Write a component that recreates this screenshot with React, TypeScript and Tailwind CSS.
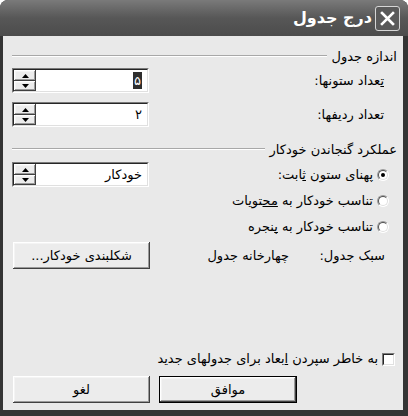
import React from "react";

const raised =
  "bg-[#ececec] shadow-[inset_-1px_-1px_0_#404040,inset_1px_1px_0_#ffffff,inset_-2px_-2px_0_#9a9a9a,inset_2px_2px_0_#f4f4f4]";

function Arrow({ up }: { up?: boolean }) {
  return (
    <svg width="7" height="4" viewBox="0 0 7 4">
      {up ? <path d="M3.5 0 L7 4 L0 4 Z" fill="#000" /> : <path d="M0 0 L7 0 L3.5 4 Z" fill="#000" />}
    </svg>
  );
}

function Spin({ children }: { children: React.ReactNode }) {
  return (
    <div className="w-[137px] h-[25px] border-t border-l border-t-[#7a7a7a] border-l-[#7a7a7a] border-b border-r border-b-white border-r-white">
      <div className="w-full h-full flex bg-white border-t border-l border-t-[#262626] border-l-[#262626] border-b border-r border-b-[#e0e0e0] border-r-[#e0e0e0]">
        <div className="flex-1 flex items-center pr-[5px] text-[13px] leading-none">{children}</div>
        <div className="w-[22px] flex flex-col">
          <div className={`h-[11px] flex items-center justify-center ${raised}`}>
            <Arrow up />
          </div>
          <div className={`h-[10px] flex items-center justify-center ${raised}`}>
            <Arrow />
          </div>
        </div>
      </div>
    </div>
  );
}

function Radio({ checked }: { checked?: boolean }) {
  return (
    <div className="w-[12px] h-[12px] shrink-0 rounded-full border border-t-[#9a9a9a] border-l-[#9a9a9a] border-b-white border-r-white bg-white flex items-center justify-center">
      <div className="w-[10px] h-[10px] rounded-full border border-t-[#505050] border-l-[#505050] border-b-[#e0e0e0] border-r-[#e0e0e0] flex items-center justify-center">
        {checked && <div className="w-[4px] h-[4px] rounded-full bg-black" />}
      </div>
    </div>
  );
}

function Header({ children }: { children: React.ReactNode }) {
  return (
    <div className="h-[14px] flex items-center gap-[5px] pr-[6px] pl-[9px] text-[13px] leading-none">
      <span className="whitespace-nowrap">{children}</span>
      <div className="flex-1 h-[2px] border-t border-t-[#a8a8a8] border-b border-b-white" />
    </div>
  );
}

export default function App() {
  return (
    <div className="w-[408px] h-[416px] bg-white font-['DejaVu_Sans',sans-serif] text-black">
      <div dir="rtl" className="w-[408px] h-[416px] flex flex-col rounded-t-[8px] overflow-hidden bg-[#343434]">
        {/* title bar */}
        <div className="h-[36px] shrink-0 flex items-center gap-[3px] pr-[8px] bg-gradient-to-b from-[#7a7a7a] via-[#575757] to-[#4c4c4c]">
          <div className="w-[25px] h-[25px] rounded-[3px] border border-[#d6d6d6] bg-[#5a5a5a] flex items-center justify-center">
            <svg width="15" height="15" viewBox="0 0 15 15">
              <path d="M2 2 L13 13 M13 2 L2 13" stroke="#fff" strokeWidth="2.6" strokeLinecap="square" />
            </svg>
          </div>
          <span className="text-white font-bold text-[16px] leading-none pb-[1px]">درج جدول</span>
        </div>

        {/* body */}
        <div className="flex-1 ml-[3px] mr-[5px] mb-[6px] bg-[#e9e9e9] flex flex-col">
          <div className="mt-[13px]">
            <Header>اندازه جدول</Header>
          </div>

          <div className="mt-[5px] h-[25px] flex items-center justify-between pr-[19px] pl-[9px] text-[13px]">
            <span>
              <span className="underline">ت</span>عداد ستونها:
            </span>
            <Spin>
              <span className="bg-[#2e2e2e] text-white px-[1px] py-[2px]">۵</span>
            </Spin>
          </div>

          <div className="mt-[9px] h-[25px] flex items-center justify-between pr-[19px] pl-[9px] text-[13px]">
            <span>تعداد ردیفها:</span>
            <Spin>
              <span>۲</span>
            </Spin>
          </div>

          <div className="mt-[15px]">
            <Header>عملکرد گنجاندن خودکار</Header>
          </div>

          <div className="mt-[6px] h-[25px] flex items-center justify-between pr-[14px] pl-[9px] text-[13px]">
            <div className="flex items-center gap-[4px]">
              <Radio checked />
              <span>
                پهنای ستون <span className="underline">ث</span>ابت:
              </span>
            </div>
            <Spin>
              <span>خودکار</span>
            </Spin>
          </div>

          <div className="mt-[4px] h-[20px] flex items-center gap-[4px] pr-[14px] text-[13px]">
            <Radio />
            <span>
              تناسب خودکار به <span className="underline">مح</span>تویات
            </span>
          </div>

          <div className="mt-[6px] h-[20px] flex items-center gap-[4px] pr-[14px] text-[13px]">
            <Radio />
            <span>
              تناسب خودکار به <span className="underline">پ</span>نجره
            </span>
          </div>

          <div className="mt-[5px] h-[27px] flex items-center pr-[18px] pl-[10px] text-[13px]">
            <div className="w-[96px] shrink-0">سبک جدول:</div>
            <span>چهارخانه جدول</span>
            <div className={`mr-auto w-[137px] h-[27px] flex items-center justify-center ${raised}`}>
              شکلبندی خودکار...
            </div>
          </div>

          <div className="flex-1" />

          <div className="h-[16px] flex items-center gap-[4px] pr-[8px] text-[13px]">
            <div className="w-[13px] h-[13px] shrink-0 bg-white border-t border-l border-t-[#7a7a7a] border-l-[#7a7a7a] border-b border-r border-b-white border-r-white">
              <div className="w-full h-full border-t border-l border-t-[#262626] border-l-[#262626] border-b border-r border-b-[#e0e0e0] border-r-[#e0e0e0]" />
            </div>
            <span>
              به خاطر سپردن <span className="underline">ا</span>بعاد برای جدولهای جدید
            </span>
          </div>

          <div className="mt-[9px] mb-[7px] h-[27px] flex justify-end gap-[9px] pl-[10px] text-[13px]">
            <div className="w-[138px] h-[27px] border border-black">
              <div className={`w-full h-full flex items-center justify-center ${raised}`}>موافق</div>
            </div>
            <div className={`w-[137px] h-[27px] flex items-center justify-center ${raised}`}>لغو</div>
          </div>
        </div>
      </div>
    </div>
  );
}
